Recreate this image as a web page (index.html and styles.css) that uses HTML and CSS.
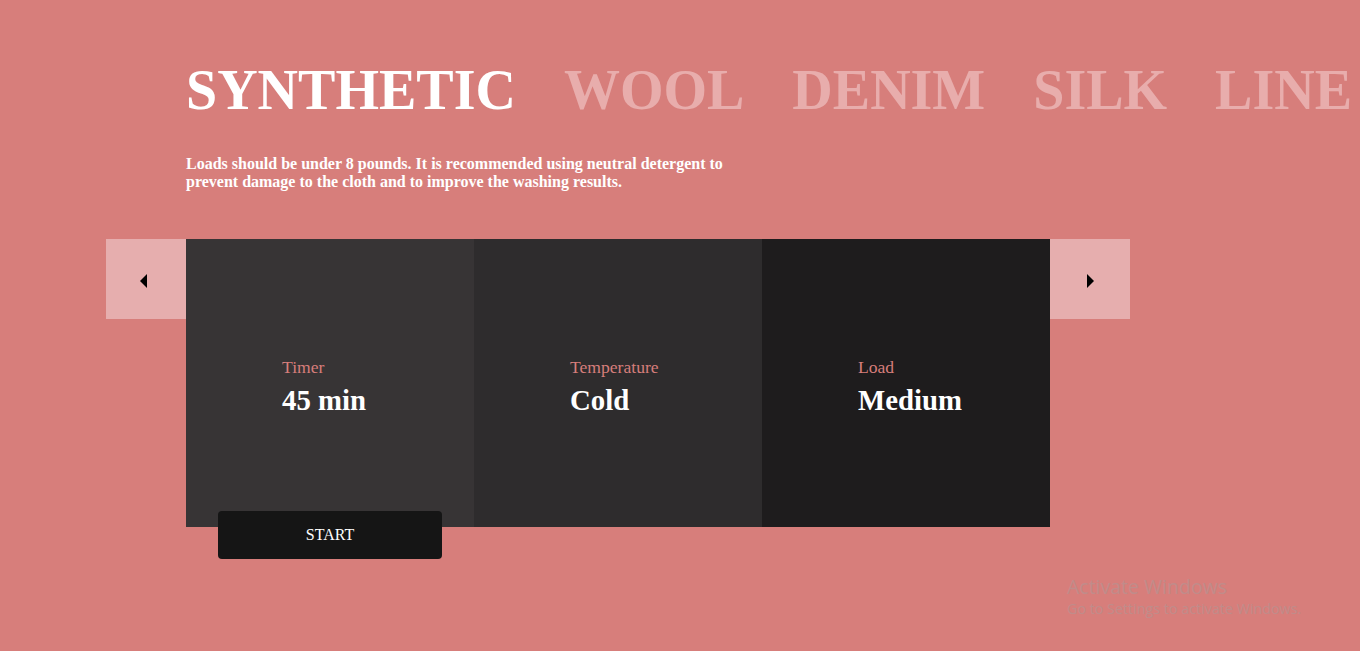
FILE: index.html
```html
<!DOCTYPE html>
<html lang="en">
<head>
<meta charset="utf-8">
<title>Washer</title>
<link rel="stylesheet" href="styles.css">
</head>
<body>
<div class="page">
  <nav class="tabs">
    <span class="tab active">SYNTHETIC</span>
    <span class="tab">WOOL</span>
    <span class="tab">DENIM</span>
    <span class="tab">SILK</span>
    <span class="tab">LINE</span>
  </nav>
  <p class="desc">Loads should be under 8 pounds. It is recommended using neutral detergent to prevent damage to the cloth and to improve the washing results.</p>
  <div class="slider">
    <button class="arrow" aria-label="previous"><span class="tri tri-left"></span></button>
    <div class="cards">
      <div class="card c1"><div class="label">Timer</div><div class="value">45 min</div></div>
      <div class="card c2"><div class="label">Temperature</div><div class="value">Cold</div></div>
      <div class="card c3"><div class="label">Load</div><div class="value">Medium</div></div>
    </div>
    <button class="arrow" aria-label="next"><span class="tri tri-right"></span></button>
  </div>
  <button class="start">START</button>
</div>
<div class="watermark">
  <div class="wm-title">Activate Windows</div>
  <div class="wm-sub">Go to Settings to activate Windows.</div>
</div>
</body>
</html>
```
FILE: styles.css
```css
html, body {
  margin: 0;
  padding: 0;
}
body {
  background: #d77e7b;
  font-family: "Liberation Serif", "Times New Roman", serif;
  color: #fff;
  height: 651px;
  overflow: hidden;
}
.page {
  padding-top: 58px;
}
.tabs {
  display: flex;
  gap: 48px;
  padding-left: 186px;
  white-space: nowrap;
  font-size: 56px;
  line-height: 64px;
  font-weight: bold;
}
.tab {
  color: #e8adac;
}
.tab.active {
  color: #fff;
}
.desc {
  margin: 33px 0 0 186px;
  width: 560px;
  font-size: 16px;
  line-height: 18px;
  font-weight: bold;
}
.slider {
  display: flex;
  align-items: flex-start;
  margin: 48px 0 0 106px;
}
.arrow {
  width: 80px;
  height: 80px;
  border: 0;
  padding: 0;
  margin: 0;
  background: #e6aeae;
  display: flex;
  align-items: center;
  justify-content: center;
}
.tri {
  width: 0;
  height: 0;
  border-top: 7px solid transparent;
  border-bottom: 7px solid transparent;
  margin-top: 4px;
}
.tri-left {
  border-right: 7px solid #000;
  margin-right: 6px;
}
.tri-right {
  border-left: 7px solid #000;
  margin-left: 1px;
}
.cards {
  display: flex;
}
.card {
  width: 288px;
  height: 288px;
  box-sizing: border-box;
  padding: 0 0 0 96px;
  display: flex;
  flex-direction: column;
  justify-content: center;
}
.c1 { background: #373435; }
.c2 { background: #2e2c2d; }
.c3 { background: #1e1c1d; }
.label {
  color: #d77e7b;
  font-size: 17.6px;
  line-height: 20px;
  margin-top: 7px;
}
.value {
  font-size: 28.8px;
  font-weight: bold;
  line-height: 33px;
  margin-top: 7px;
}
.start {
  position: relative;
  z-index: 1;
  display: block;
  margin: -16px 0 0 218px;
  width: 224px;
  height: 48px;
  border: 0;
  border-radius: 4px;
  background: #151515;
  color: #fff;
  font-family: "Liberation Serif", "Times New Roman", serif;
  font-size: 16px;
  padding: 0;
}
.watermark {
  position: absolute;
  left: 1067px;
  top: 574px;
  font-family: "Open Sans", "Noto Sans", sans-serif;
  color: #c08c8a;
}
.wm-title {
  font-size: 19.5px;
  line-height: 25px;
}
.wm-sub {
  font-size: 14.3px;
  line-height: 20px;
}
```
